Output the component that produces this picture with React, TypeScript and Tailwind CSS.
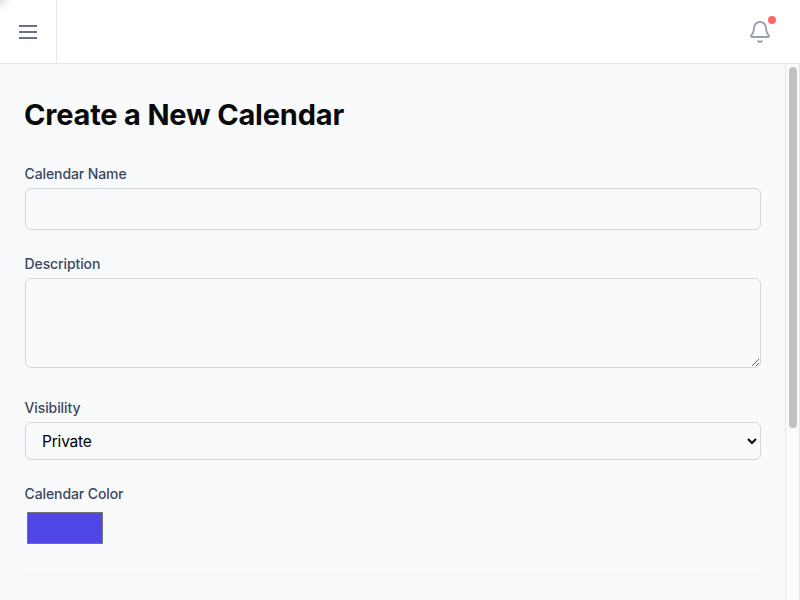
import React from "react";

function Label({ children }: { children: React.ReactNode }) {
  return <span className="-ml-[0.5px] block text-sm leading-5 font-[450] tracking-[-0.1px] text-[#3c485c]">{children}</span>;
}

export default function App() {
  return (
    <div className="flex h-[600px] w-[800px] flex-col overflow-hidden bg-[#f9fafc] font-['Inter',sans-serif] text-black">
      <header className="relative flex h-16 shrink-0 border-b border-gray-200 bg-white">
        <div className="absolute -left-5 -top-5 h-5 w-5 shadow-[0_0_12px_3px_rgba(0,0,0,0.25)]" />
        <button className="flex w-[57px] items-center justify-center border-r border-gray-200 text-[#6b7280]" aria-label="Open menu">
          <svg className="h-6 w-6" viewBox="0 0 24 24" fill="none" stroke="currentColor" strokeWidth="2">
            <path d="M3 6h18M3 12h18M3 18h18" />
          </svg>
        </button>
        <div className="flex flex-1 items-center justify-end pr-7">
          <div className="relative text-[#99a1af]">
            <svg className="h-6 w-6" viewBox="0 0 24 24" fill="none" stroke="currentColor" strokeWidth="1.9" strokeLinecap="round" strokeLinejoin="round">
              <path d="M3.262 15.326A1 1 0 0 0 4 17h16a1 1 0 0 0 .74-1.673C19.41 13.956 18 12.499 18 8A6 6 0 0 0 6 8c0 4.499-1.411 5.956-2.738 7.326" />
              <path d="M10.268 21a2 2 0 0 0 3.464 0" />
            </svg>
            <span className="absolute -top-1 -right-1 h-2 w-2 rounded-full bg-[#ff6467]" />
          </div>
        </div>
      </header>
      <div className="flex min-h-0 flex-1">
        <main className="min-w-0 flex-1 overflow-hidden pt-8 pr-6 pl-[25px]">
          <h1 className="-ml-px pt-px text-[29px] leading-[35px] font-bold tracking-[-0.19px] text-[#0a0a0a]">Create a New Calendar</h1>
          <label className="mt-8 block">
            <Label>Calendar Name</Label>
            <input className="mt-1 block h-[42px] w-full rounded-md border border-gray-300 px-4" />
          </label>
          <label className="mt-6 block">
            <Label>Description</Label>
            <textarea className="mt-1 block h-[90px] w-full rounded-md border border-gray-300 px-4" />
          </label>
          <label className="mt-[30px] block">
            <Label>Visibility</Label>
            <select className="mt-1 block h-[38px] w-full rounded-md border border-gray-300 px-3 text-[15.5px] tracking-[-0.2px]">
              <option>Private</option>
            </select>
          </label>
          <div className="mt-6">
            <Label>Calendar Color</Label>
            <div className="mt-2 ml-0.5 h-8 w-[76px] border border-[#767676] bg-[#4f46e5]" />
          </div>
          <hr className="mt-[30px] border-gray-100" />
        </main>
        <div className="flex w-[15px] justify-center border-x border-[#e6e6e6] bg-[#fafafa] pt-[3px]">
          <div className="h-[361px] w-2 rounded-full bg-[#c1c1c1]" />
        </div>
      </div>
    </div>
  );
}
